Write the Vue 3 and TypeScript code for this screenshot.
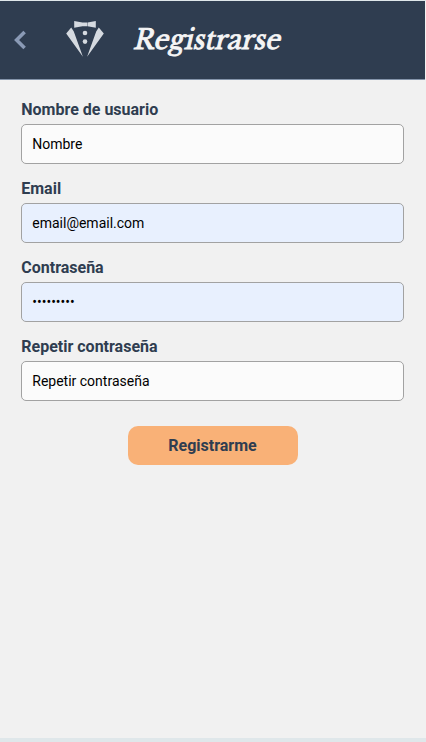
<script setup lang="ts">
import { reactive } from 'vue'

interface Field {
  id: string
  label: string
  type: string
  placeholder: string
  filled: boolean
}

const fields: Field[] = [
  { id: 'name', label: 'Nombre de usuario', type: 'text', placeholder: 'Nombre', filled: false },
  { id: 'email', label: 'Email', type: 'email', placeholder: 'Email', filled: true },
  { id: 'password', label: 'Contraseña', type: 'password', placeholder: 'Contraseña', filled: true },
  { id: 'repeat', label: 'Repetir contraseña', type: 'password', placeholder: 'Repetir contraseña', filled: false },
]

const values = reactive<Record<string, string>>({
  name: '',
  email: 'email@email.com',
  password: 'password1',
  repeat: '',
})
</script>

<template>
  <div class="page">
    <header class="header">
      <button class="back" type="button" aria-label="Volver">
        <svg width="14" height="20" viewBox="0 0 14 20">
          <path d="M11.6 2 3.6 10 11.6 18" fill="none" stroke="#8a9ab5" stroke-width="3.6" />
        </svg>
      </button>
      <svg class="logo" width="38" height="38" viewBox="0 0 38 38">
        <g fill="#d5dae0">
          <path d="M8.2 1 16.4 2.4V6.2L8.2 7.8ZM29.8 1 21.6 2.4V6.2L29.8 7.8ZM16 2.6H22V6.2H16Z" />
          <circle cx="19" cy="13" r="2.3" />
          <circle cx="19" cy="21.6" r="2.3" />
          <path d="M5.2 7.6 0.2 13.5 16.9 36.8 7.8 11.6ZM32.8 7.6 37.8 13.5 21.1 36.8 30.2 11.6Z" />
        </g>
      </svg>
      <h1 class="title">Registrarse</h1>
    </header>
    <form class="form" @submit.prevent>
      <div v-for="field in fields" :key="field.id" class="field">
        <label class="label" :for="field.id">{{ field.label }}</label>
        <input
          :id="field.id"
          v-model="values[field.id]"
          class="input"
          :class="{ filled: field.filled }"
          :type="field.type"
          :placeholder="field.placeholder"
        />
      </div>
      <button class="submit" type="submit">Registrarme</button>
    </form>
  </div>
</template>

<style>
body {
  background: #f1f1f1;
}
</style>

<style scoped>
.page {
  box-sizing: border-box;
  height: 742px;
  border-top: 1px solid #dfe7ea;
  border-bottom: 4px solid #dfe7ea;
  background: #f1f1f1;
  font-family: Roboto, sans-serif;
}
.header {
  box-sizing: border-box;
  display: flex;
  align-items: center;
  height: 79px;
  margin-right: 1px;
  padding-left: 13px;
  background: #2f3d50;
  border-bottom: 1px solid #8494aa;
}
.back {
  display: flex;
  padding: 0;
  border: 0;
  background: none;
}
.back svg {
  display: block;
}
.logo {
  margin: 0 0 2px 39px;
}
.title {
  margin: 0 0 0 31px;
  color: #f5f5f5;
  font: normal 400 27px/40px 'Libre Baskerville', 'Liberation Serif', serif;
  -webkit-text-stroke: 0.9px #f5f5f5;
  transform: scaleX(0.96) skewX(-14deg);
  transform-origin: 0 50%;
}
.form {
  display: flex;
  flex-direction: column;
  padding: 20px 22.25px 0 21.25px;
}
.field {
  display: flex;
  flex-direction: column;
  height: 79px;
}
.label {
  margin-bottom: 5px;
  color: #2f3d50;
  font-size: 16px;
  font-weight: 700;
  line-height: 19px;
}
.input {
  box-sizing: border-box;
  width: 100%;
  height: 40px;
  padding: 0 10px;
  border: 1px solid #a2a2a2;
  border-radius: 5px;
  outline: 0;
  background: #fbfbfb;
  color: #000;
  font: 14px Roboto, sans-serif;
}
.input::placeholder {
  color: #000;
  opacity: 1;
}
.filled {
  background: #e8f0fe;
}
.submit {
  align-self: center;
  width: 170px;
  height: 39px;
  margin-top: 10px;
  padding: 0;
  border: 0;
  border-radius: 10px;
  background: #f9b177;
  color: #2f3d50;
  font: 700 16px Roboto, sans-serif;
}
</style>
